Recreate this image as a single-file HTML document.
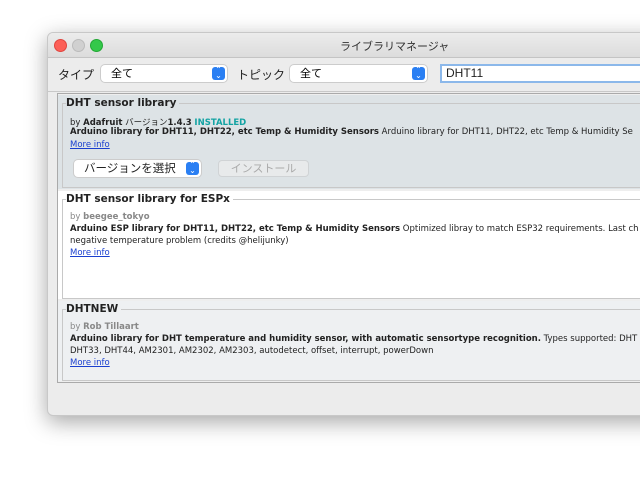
<!DOCTYPE html>
<html><head><meta charset="utf-8"><style>
body{margin:0;width:640px;height:480px;background:#fff;overflow:hidden;position:relative;font-family:"Liberation Sans","Noto Sans CJK JP",sans-serif;}
.win{position:absolute;left:47px;top:32px;width:620px;height:382px;background:#ececec;border-radius:6px;box-shadow:0 6px 22px rgba(0,0,0,.35);overflow:hidden;border:1px solid #c8c8c8;}
.tb{height:24px;background:linear-gradient(#ececec,#dcdcdc);border-bottom:1px solid #c4c4c4;position:relative}
.dot{position:absolute;top:6px;width:12px;height:12px;border-radius:50%}
.title{position:absolute;left:292px;top:5px;font-size:11px;color:#333}
.abs{position:absolute}
.lbl{font-size:12px;color:#222}
.sel{background:#fff;border-radius:4px;box-shadow:0 0 0 1px #ccc;height:17px;font-size:11px;line-height:18px;padding-left:10px;box-sizing:border-box}
.arr{position:absolute;right:2px;top:2px;width:13px;height:13px;background:#2a7ff3;border-radius:3px;color:#fff;font-size:8px;line-height:6px;text-align:center}
.item{position:absolute;left:10px;width:640px;font-size:9px;color:#222}
.fs{position:absolute;left:4px;right:0;border:1px solid #c8c8c8;border-right:none}
.t{position:absolute;left:8px;font-size:11.5px;font-weight:bold;color:#222;padding-right:3px;font-family:"DejaVu Sans",sans-serif;font-size:10.5px}
.ln{position:absolute;left:12px;white-space:nowrap;font-size:8.5px;font-family:"DejaVu Sans","Noto Sans CJK JP",sans-serif}
a{color:#1a3fcf;text-decoration:underline}
.g{color:#888}
</style></head><body>
<div class="win">
 <div class="tb">
  <div class="dot" style="left:6px;background:#fc5f57;border:1px solid #e0443e;width:11px;height:11px"></div>
  <div class="dot" style="left:24px;background:#d0d0d0;border:1px solid #bbb;width:11px;height:11px"></div>
  <div class="dot" style="left:42px;background:#34c84a;border:1px solid #22a834;width:11px;height:11px"></div>
  <div class="title">ライブラリマネージャ</div>
 </div>
 <div class="abs lbl" style="left:10px;top:33px">タイプ</div>
 <div class="abs sel" style="left:53px;top:32px;width:126px">全て<div class="arr">⌃<br>⌄</div></div>
 <div class="abs lbl" style="left:189px;top:33px">トピック</div>
 <div class="abs sel" style="left:242px;top:32px;width:137px">全て<div class="arr">⌃<br>⌄</div></div>
 <div class="abs" style="left:392px;top:31px;width:240px;height:19px;background:#fff;border:2px solid #8cb8ea;box-sizing:border-box;font-size:12px;line-height:15px;padding-left:4px;color:#222">DHT11</div>
 <div class="abs" style="left:0;top:58px;width:620px;border-top:1px solid #c8c8c8"></div>
 <div class="abs" style="left:9px;top:60px;width:620px;height:288px;border:1px solid #aaa;background:#eee"></div>
 <!-- item 1 -->
 <div class="item" style="top:62px;height:94px;background:#dde3e6">
  <div class="fs" style="top:8px;height:83px"></div>
  <div class="t" style="top:2px;background:#dde3e6">DHT sensor library</div>
  <div class="ln" style="top:21px">by <b>Adafruit</b> バージョン<b>1.4.3</b> <b style="color:#13a3a3">INSTALLED</b></div>
  <div class="ln" style="top:32px"><b>Arduino library for DHT11, DHT22, etc Temp &amp; Humidity Sensors</b> Arduino library for DHT11, DHT22, etc Temp &amp; Humidity Se</div>
  <div class="ln" style="top:45px"><a>More info</a></div>
  <div class="abs sel" style="left:16px;top:65px;width:127px;font-size:11.5px">バージョンを選択<div class="arr">⌃<br>⌄</div></div>
  <div class="abs" style="left:160px;top:65px;width:91px;height:17px;background:#e8eaeb;border:1px solid #d0d3d5;border-radius:4px;font-size:11px;color:#aaa;text-align:center;line-height:16px;box-sizing:border-box">インストール</div>
 </div>
 <!-- item 2 -->
 <div class="item" style="top:158px;height:108px;background:#fff">
  <div class="fs" style="top:8px;height:98px"></div>
  <div class="t" style="top:2px;background:#fff">DHT sensor library for ESPx</div>
  <div class="ln" style="top:21px" ><span class="g">by <b>beegee_tokyo</b></span></div>
  <div class="ln" style="top:33px"><b>Arduino ESP library for DHT11, DHT22, etc Temp &amp; Humidity Sensors</b> Optimized libray to match ESP32 requirements. Last ch</div>
  <div class="ln" style="top:45px">negative temperature problem (credits @helijunky)</div>
  <div class="ln" style="top:57px"><a>More info</a></div>
 </div>
 <!-- item 3 -->
 <div class="item" style="top:268px;height:80px;background:#eef0f2">
  <div class="fs" style="top:8px;height:70px"></div>
  <div class="t" style="top:2px;background:#eef0f2">DHTNEW</div>
  <div class="ln" style="top:21px"><span class="g">by <b>Rob Tillaart</b></span></div>
  <div class="ln" style="top:33px"><b>Arduino library for DHT temperature and humidity sensor, with automatic sensortype recognition.</b> Types supported: DHT</div>
  <div class="ln" style="top:45px">DHT33, DHT44, AM2301, AM2302, AM2303, autodetect, offset, interrupt, powerDown</div>
  <div class="ln" style="top:57px"><a>More info</a></div>
 </div>
</div>
</body></html>
